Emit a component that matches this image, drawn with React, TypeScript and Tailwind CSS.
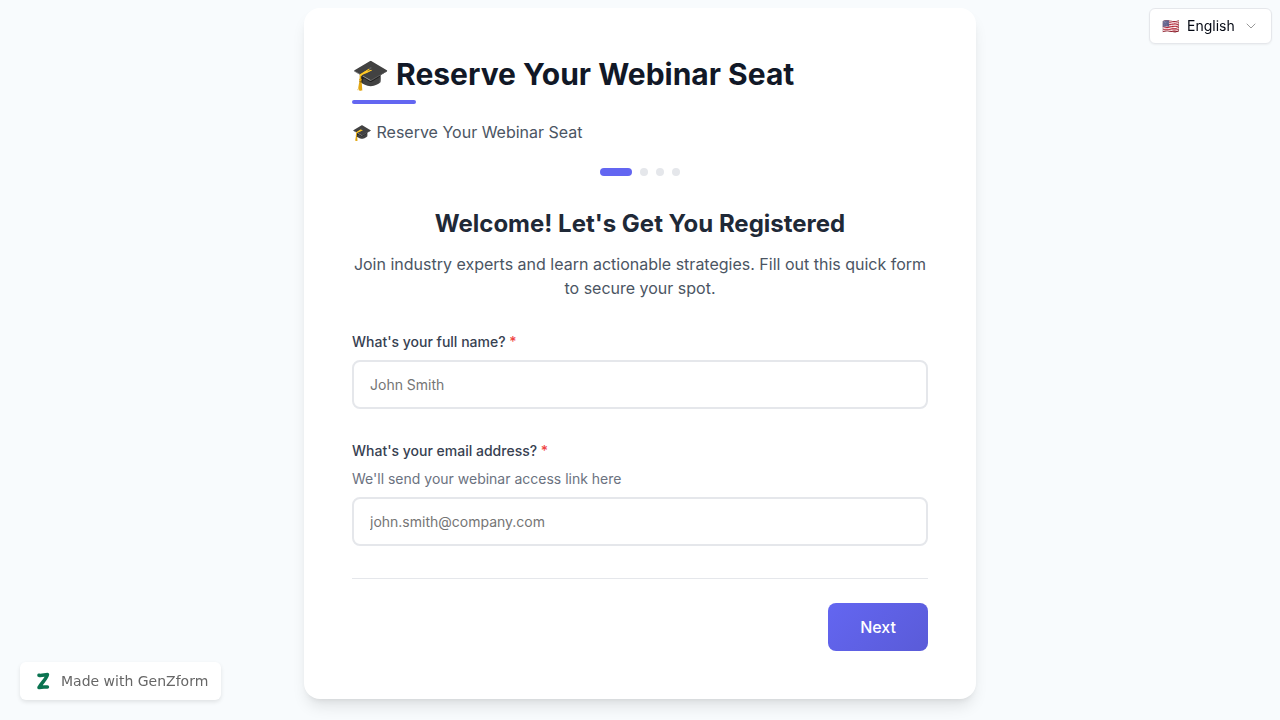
import React from 'react';
import { LuChevronDown } from 'react-icons/lu';

type FieldProps = {
  id: string;
  type: string;
  label: string;
  placeholder: string;
  hint?: string;
};

function Field({ id, type, label, placeholder, hint }: FieldProps) {
  return (
    <div className="flex flex-col">
      <label
        htmlFor={id}
        className="text-sm leading-5 font-medium text-[#374151]"
      >
        {label} <span className="text-[#ef4444]">*</span>
      </label>
      {hint && (
        <p id={`${id}-hint`} className="mt-2 text-sm leading-5 text-[#6b7280]">
          {hint}
        </p>
      )}
      <input
        id={id}
        type={type}
        placeholder={placeholder}
        required
        aria-describedby={hint ? `${id}-hint` : undefined}
        className="mt-2 h-[49px] w-full rounded-lg border-2 border-gray-200 bg-white px-4 text-sm text-gray-900 outline-none placeholder:text-[#757575] focus:border-[#6366f1]"
      />
    </div>
  );
}

function StepDots() {
  return (
    <div className="flex justify-center gap-2">
      <span className="h-2 w-8 rounded-full bg-[#6366f1]" />
      <span className="h-2 w-2 rounded-full bg-gray-200" />
      <span className="h-2 w-2 rounded-full bg-gray-200" />
      <span className="h-2 w-2 rounded-full bg-gray-200" />
    </div>
  );
}

function LanguagePicker() {
  return (
    <div className="fixed top-2 right-2 flex h-9 items-center rounded-md border border-gray-200 bg-white px-3 text-sm text-gray-950 shadow-xs">
      <span aria-hidden="true">🇺🇸</span>
      <select
        aria-label="Language"
        defaultValue="en"
        className="ml-2 appearance-none bg-transparent outline-none"
      >
        <option value="en">English</option>
      </select>
      <LuChevronDown
        className="ml-2 h-4 w-4 text-black opacity-40"
        strokeWidth={1.5}
      />
    </div>
  );
}

function MadeWith() {
  return (
    <a
      href="#"
      className="fixed bottom-5 left-5 flex h-[38px] items-center gap-2 rounded-md bg-white pr-[13px] pl-[13px] font-['DejaVu_Sans',sans-serif] text-sm text-[#666666] shadow-[0_2px_4px_rgba(0,0,0,0.1)]"
    >
      <svg viewBox="0 0 20 20" className="h-5 w-5" fill="none">
        <path
          d="M6 4.300c2.600.7 5.600-.7 8.400-.8C13.600 8 8.600 11.500 6 16.500c2.800-.9 5.800-.5 8.400-.5"
          stroke="#0a7350"
          strokeWidth="3.600"
          strokeLinecap="round"
          strokeLinejoin="round"
        />
      </svg>
      Made with GenZform
    </a>
  );
}

export default function App() {
  return (
    <div className="min-h-screen bg-[#f8fbfd] px-4 pt-2 pb-5 font-['Inter',sans-serif]">
      <LanguagePicker />

      <main className="mx-auto max-w-2xl rounded-2xl bg-white p-12 shadow-[0_10px_15px_-3px_rgba(0,0,0,0.1),0_4px_6px_-4px_rgba(0,0,0,0.1)]">
        <h1 className="text-3xl leading-9 font-bold text-[#111827]">
          🎓 Reserve Your Webinar Seat
        </h1>
        <div className="mt-2 h-1 w-16 rounded-full bg-[#6366f1]" />
        <p className="mt-4 mb-6 text-base leading-6 text-[#4b5563]">
          🎓 Reserve Your Webinar Seat
        </p>

        <StepDots />

        <form onSubmit={(e) => e.preventDefault()}>
          <div className="mt-8 text-center">
            <h2 className="text-2xl leading-8 font-bold text-[#1f2937]">
              Welcome! Let's Get You Registered
            </h2>
            <p className="mt-3 text-base leading-6 text-[#4b5563]">
              Join industry experts and learn actionable strategies. Fill out
              this quick form to secure your spot.
            </p>
          </div>

          <div className="mt-8 flex flex-col gap-8">
            <Field
              id="name"
              type="text"
              label="What's your full name?"
              placeholder="John Smith"
            />
            <Field
              id="email"
              type="email"
              label="What's your email address?"
              placeholder="john.smith@company.com"
              hint="We'll send your webinar access link here"
            />
          </div>

          <div className="mt-8 flex justify-end border-t border-gray-200 pt-6">
            <button
              type="submit"
              className="h-12 rounded-lg bg-linear-135 from-[#6366f1] to-[#5a5bd8] px-8 text-base font-medium text-white"
            >
              Next
            </button>
          </div>
        </form>
      </main>

      <MadeWith />
    </div>
  );
}
